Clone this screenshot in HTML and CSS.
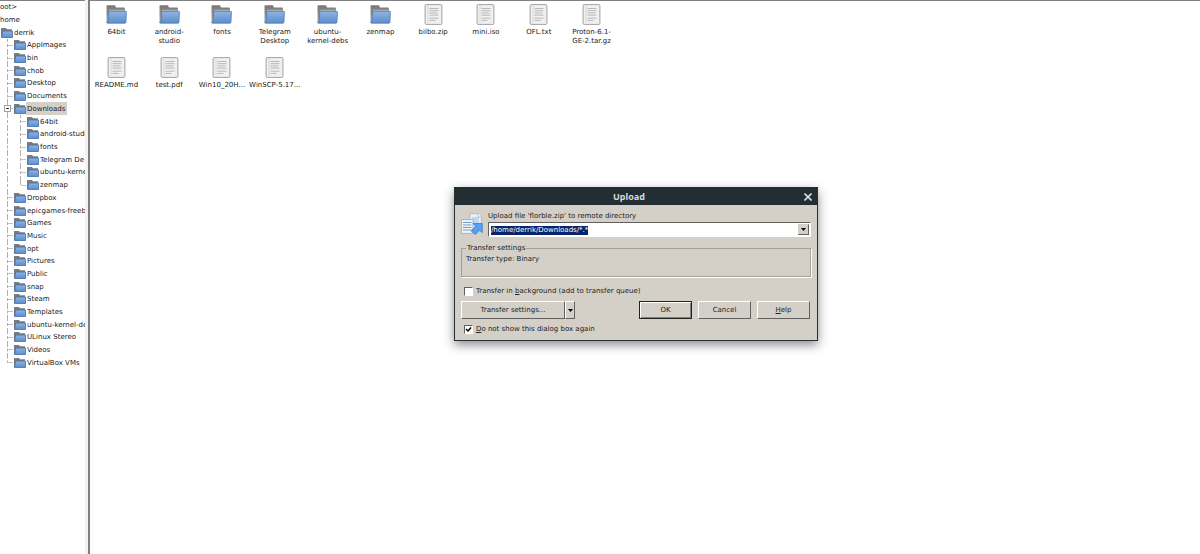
FILE: index.html
```html
<!DOCTYPE html>
<html lang="en">
<head>
<meta charset="utf-8">
<title>Upload</title>
<link rel="stylesheet" href="styles.css">
</head>
<body>
<svg class="defs" aria-hidden="true">
  <defs>
    <linearGradient id="blue" x1="0" y1="0" x2="0" y2="1"><stop offset="0" stop-color="#8fb4e3"/><stop offset="1" stop-color="#5c8dca"/></linearGradient>
    <linearGradient id="gray" x1="0" y1="0" x2="0" y2="1"><stop offset="0" stop-color="#777"/><stop offset="1" stop-color="#a4a4a4"/></linearGradient>
  </defs>
  <symbol id="folder" viewBox="0 0 20 18">
    <path d="M.5 1Q.5.3 1.3.3H8Q8.8.3 9 1L9.4 2.4H17.200Q18 2.400 18 3.200V16.500H.5z" fill="url(#gray)"/>
    <path d="M3 4.500H17.500V8H3z" fill="#b4b4b4"/>
    <path d="M2.600 6.700Q2.600 6 3.300 6H18.800Q19.600 6 19.500 6.800L19 16.400Q18.900 17.300 18 17.300H1.300Q.6 17.300.8 16.400 2.300 15 2.300 13z" fill="url(#blue)" stroke="#4679b8" stroke-width=".7"/>
  </symbol>
  <symbol id="small-folder" viewBox="0 0 12 10">
    <path d="M0 0H5L6 1.200H11V9H0z" fill="#7c7c7c"/>
    <path d="M1.600 3H11.500V9.500H.5z" fill="url(#blue)" stroke="#3d70b0" stroke-width=".8"/>
  </symbol>
  <symbol id="file" viewBox="0 0 18 21">
    <rect x=".6" y=".6" width="16.800" height="19.800" rx="1" fill="#f0f0f0" stroke="#a2a2a2"/>
    <path d="M3.500 1.500V19" stroke="#d8d8d8" fill="none"/>
    <path d="M5 4.500H14M5 6.700H14M5 8.900H13M5 11.100H14M5 14.200H14M5 16.400H11" stroke="#b8b8b8" fill="none"/>
  </symbol>
</svg>
<main class="app">
  <nav class="tree-pane" aria-label="Folders">
    <ul class="tree">
      <li class="row root">oot&gt;</li>
      <li class="row root">home</li>
      <li class="row level-0"><svg><use href="#small-folder"/></svg><span>derrik</span></li>
      <li class="row level-1"><svg><use href="#small-folder"/></svg><span>AppImages</span></li>
      <li class="row level-1"><svg><use href="#small-folder"/></svg><span>bin</span></li>
      <li class="row level-1"><svg><use href="#small-folder"/></svg><span>chob</span></li>
      <li class="row level-1"><svg><use href="#small-folder"/></svg><span>Desktop</span></li>
      <li class="row level-1"><svg><use href="#small-folder"/></svg><span>Documents</span></li>
      <li class="row level-1"><button class="toggle" type="button" aria-label="Collapse Downloads"></button><svg><use href="#small-folder"/></svg><span class="current">Downloads</span></li>
      <li class="row level-2"><svg><use href="#small-folder"/></svg><span>64bit</span></li>
      <li class="row level-2"><svg><use href="#small-folder"/></svg><span>android-studi</span></li>
      <li class="row level-2"><svg><use href="#small-folder"/></svg><span>fonts</span></li>
      <li class="row level-2"><svg><use href="#small-folder"/></svg><span>Telegram De</span></li>
      <li class="row level-2"><svg><use href="#small-folder"/></svg><span>ubuntu-kerne</span></li>
      <li class="row level-2 last"><svg><use href="#small-folder"/></svg><span>zenmap</span></li>
      <li class="row level-1"><svg><use href="#small-folder"/></svg><span>Dropbox</span></li>
      <li class="row level-1"><svg><use href="#small-folder"/></svg><span>epicgames-freeb</span></li>
      <li class="row level-1"><svg><use href="#small-folder"/></svg><span>Games</span></li>
      <li class="row level-1"><svg><use href="#small-folder"/></svg><span>Music</span></li>
      <li class="row level-1"><svg><use href="#small-folder"/></svg><span>opt</span></li>
      <li class="row level-1"><svg><use href="#small-folder"/></svg><span>Pictures</span></li>
      <li class="row level-1"><svg><use href="#small-folder"/></svg><span>Public</span></li>
      <li class="row level-1"><svg><use href="#small-folder"/></svg><span>snap</span></li>
      <li class="row level-1"><svg><use href="#small-folder"/></svg><span>Steam</span></li>
      <li class="row level-1"><svg><use href="#small-folder"/></svg><span>Templates</span></li>
      <li class="row level-1"><svg><use href="#small-folder"/></svg><span>ubuntu-kernel-de</span></li>
      <li class="row level-1"><svg><use href="#small-folder"/></svg><span>ULinux Stereo</span></li>
      <li class="row level-1"><svg><use href="#small-folder"/></svg><span>Videos</span></li>
      <li class="row level-1 last"><svg><use href="#small-folder"/></svg><span>VirtualBox VMs</span></li>
    </ul>
  </nav>
  <section class="files-pane" aria-label="Files">
    <ul class="files">
      <li class="item"><svg><use href="#folder"/></svg><span>64bit</span></li>
      <li class="item"><svg><use href="#folder"/></svg><span>android-<br>studio</span></li>
      <li class="item"><svg><use href="#folder"/></svg><span>fonts</span></li>
      <li class="item"><svg><use href="#folder"/></svg><span>Telegram<br>Desktop</span></li>
      <li class="item"><svg><use href="#folder"/></svg><span>ubuntu-<br>kernel-debs</span></li>
      <li class="item"><svg><use href="#folder"/></svg><span>zenmap</span></li>
      <li class="item"><svg><use href="#file"/></svg><span>bilbo.zip</span></li>
      <li class="item"><svg><use href="#file"/></svg><span>mini.iso</span></li>
      <li class="item"><svg><use href="#file"/></svg><span>OFL.txt</span></li>
      <li class="item"><svg><use href="#file"/></svg><span>Proton-6.1-<br>GE-2.tar.gz</span></li>
      <li class="item"><svg><use href="#file"/></svg><span>README.md</span></li>
      <li class="item"><svg><use href="#file"/></svg><span>test.pdf</span></li>
      <li class="item"><svg><use href="#file"/></svg><span>Win10_20H...</span></li>
      <li class="item"><svg><use href="#file"/></svg><span>WinSCP-5.17...</span></li>
    </ul>
  </section>
</main>
<div class="dialog" role="dialog" aria-labelledby="dialog-title">
  <header class="titlebar">
    <h1 id="dialog-title">Upload</h1>
    <button class="close" type="button" aria-label="Close"><svg viewBox="0 0 8 8"><path d="M.5.5L7.500 7.500M7.500.5L.5 7.500" stroke="#d8dcdd" stroke-width="1.600" fill="none"/></svg></button>
  </header>
  <form class="body">
    <div class="target">
      <svg class="upload-icon" viewBox="0 0 22 22">
        <path d="M9 .6H17L20.400 4V15.500H9z" fill="#e9f1f9" stroke="#9db4cc" stroke-width=".8"/>
        <path d="M17 .6V4H20.400" fill="#fff" stroke="#9db4cc" stroke-width=".8"/>
        <path d="M11 5H18M11 7H18M11 9H18" stroke="#9db9d8"/>
        <path d="M.6 6.600H12V20.400H.6z" fill="#f0f6fc" stroke="#91a9c4" stroke-width=".8"/>
        <path d="M2 9.500H10.500M2 12H10.500M2 14.500H10.500M2 17H10.500" stroke="#6b9bd2" stroke-width="1.200"/>
        <path d="M12 10.500H21.200V19.600L18.600 17 14.500 21.400 10.200 18.100 14.600 13.200z" fill="#55a0f4" stroke="#3978c6" stroke-width=".8"/>
      </svg>
      <div class="target-field">
        <label for="path">Upload file 'florble.zip' to remote directory</label>
        <div class="combo">
          <input id="path" type="text" value="/home/derrik/Downloads/*.*" spellcheck="false">
          <button class="drop" type="button" aria-label="Show directories"><svg viewBox="0 0 5 3"><path d="M0 0H5L2.500 3z"/></svg></button>
        </div>
      </div>
    </div>
    <fieldset class="settings">
      <legend>Transfer settings</legend>
      Transfer type: Binary
    </fieldset>
    <label class="check"><input type="checkbox"><span>Transfer in <u>b</u>ackground (add to transfer queue)</span></label>
    <div class="buttons">
      <div class="split">
        <button class="btn" type="button">Transfer settings...</button>
        <button class="btn more" type="button" aria-label="More settings"><svg viewBox="0 0 5 3"><path d="M0 0H5L2.500 3z"/></svg></button>
      </div>
      <button class="btn default" type="button">OK</button>
      <button class="btn" type="button">Cancel</button>
      <button class="btn" type="button"><u>H</u>elp</button>
    </div>
    <label class="check"><input type="checkbox" checked><span><u>D</u>o not show this dialog box again</span></label>
  </form>
</div>
<script src="script.js"></script>
</body>
</html>
```
FILE: styles.css
```css
* { box-sizing: border-box; }

body {
  margin: 0;
  font: 7px/9px "DejaVu Sans", sans-serif;
  color: #222;
  background: #fff;
}

button, input { font: inherit; color: inherit; }
ul { list-style: none; margin: 0; padding: 0; }
.defs { position: absolute; width: 0; height: 0; }

.app {
  display: flex;
  min-height: 100vh;
  background: #f2f2f2;
}

.tree-pane {
  flex: 0 0 85px;
  overflow: hidden;
  border-top: 1px solid #808080;
  background: #fff;
}

.tree {
  display: grid;
  grid-template-rows: repeat(29, 1fr);
  height: 368px;
}

.row {
  position: relative;
  display: flex;
  align-items: center;
  white-space: nowrap;
}

.row svg { flex: none; width: 12px; height: 10px; }
.row span { padding: 2px 1px 1px; }
.row .current { padding: 3px 2px 1px 1px; background: #d4d0c8; }
.level-0 { padding-left: 1px; }
.level-1 { padding-left: 14px; }
.level-2 { padding-left: 27px; }

/* Dotted guides joining the folders */
.level-1::before, .level-2::before, .level-2::after {
  content: "";
  position: absolute;
  top: 0;
  bottom: 0;
  left: 7px;
  border-left: 1px dashed #b0b0b0;
}
.level-2::after { left: 20px; }
.level-1.last::before, .level-2.last::after { bottom: 50%; }
.level-1, .level-2 {
  background: linear-gradient(#c4c4c4, #c4c4c4) 8px 50% / 5px 1px no-repeat;
}
.level-2 { background-position: 21px 50%; }

.toggle {
  position: absolute;
  left: 4px;
  width: 7px;
  height: 7px;
  padding: 0;
  border: 1px solid #a0a0a0;
  background: linear-gradient(#333, #333) center / 3px 1px no-repeat #fff;
  z-index: 1;
}

.files-pane {
  flex: 1;
  margin-left: 3px;
  border-top: 1px solid #808080;
  border-left: 2px solid #808080;
  background: #fff;
}

.files {
  display: grid;
  grid-template-columns: repeat(10, 1fr);
  grid-auto-rows: 53px;
  max-width: 528px;
}

.item {
  display: flex;
  flex-direction: column;
  align-items: center;
  gap: 3px;
  padding-top: 3px;
  text-align: center;
  white-space: nowrap;
}

.item svg { width: 21px; height: 21px; }

.dialog {
  position: absolute;
  left: 454px;
  top: 187px;
  width: 364px;
  border: 1px solid #232e33;
  background: #d4d0c8;
  box-shadow: 0 4px 10px rgba(0, 0, 0, .45);
}

.titlebar {
  display: flex;
  align-items: center;
  height: 17px;
  padding: 0 4px 0 0;
  color: #d5dadb;
  background: #232e33;
}
.titlebar h1 { flex: 1; margin: 0; font: bold 9px/10px "Noto Sans", sans-serif; text-align: center; }
.close { display: flex; width: 10px; padding: 1px; border: 0; background: none; }
.close svg { width: 8px; height: 8px; }

.body { padding: 6px; }

.target { display: flex; align-items: center; gap: 5px; }
.upload-icon { flex: none; width: 22px; height: 24px; }
.target-field { flex: 1; }
.target-field label { display: block; padding-top: 1px; margin-bottom: 1px; }

.combo {
  display: flex;
  height: 15px;
  padding: 1px;
  border: 1px solid;
  border-color: #606060 #fff #fff #606060;
  background: #fff;
}
.combo input { flex: 1; min-width: 0; padding: 1px 1px 0; border: 0; outline: 0; background: none; }
.combo input::selection { color: #fff; background: #0a246a; }

.drop {
  display: grid;
  place-items: center;
  width: 11px;
  padding: 0;
  border: 1px solid;
  border-color: #d4d0c8 #606060 #606060 #d4d0c8;
  background: #d4d0c8;
}
.drop svg, .more svg { width: 5px; height: 3px; }

.settings {
  height: 34px;
  margin: 6px 0 9px;
  padding: 2px 4px;
  border: 1px solid #a0a09c;
  box-shadow: 1px 1px #fff;
}
.settings legend { padding: 1px 1px 0; }

.check { display: flex; align-items: center; gap: 3px; padding-left: 3px; }
.check span { padding-top: 1px; }
.check input {
  appearance: none;
  width: 9px;
  height: 9px;
  margin: 0;
  border: 1px solid;
  border-color: #606060 #fff #fff #606060;
  background: #fff;
}
.check input:checked {
  background: #fff url("data:image/svg+xml,%3Csvg xmlns='http://www.w3.org/2000/svg' viewBox='0 0 7 7'%3E%3Cpath d='M1 3L3 5 6 1.500' fill='none' stroke='%23000' stroke-width='1.500'/%3E%3C/svg%3E");
}

.buttons { display: flex; gap: 6px; margin: 5px 0; padding-right: 1px; }
.split { display: flex; width: 114px; margin-right: auto; }
.split .btn:first-child { flex: 1; }
.btn {
  width: 53px;
  height: 18px;
  padding: 1px 0 0;
  border: 1px solid;
  border-color: #fff #606060 #606060 #fff;
  background: #d4d0c8;
}
.btn.more { display: grid; place-items: center; width: 10px; }
.btn.default { border-color: #222; box-shadow: inset 1px 1px #fff, inset -1px -1px #808080; }
```
FILE: script.js
```js
document.getElementById("path").select();
```
